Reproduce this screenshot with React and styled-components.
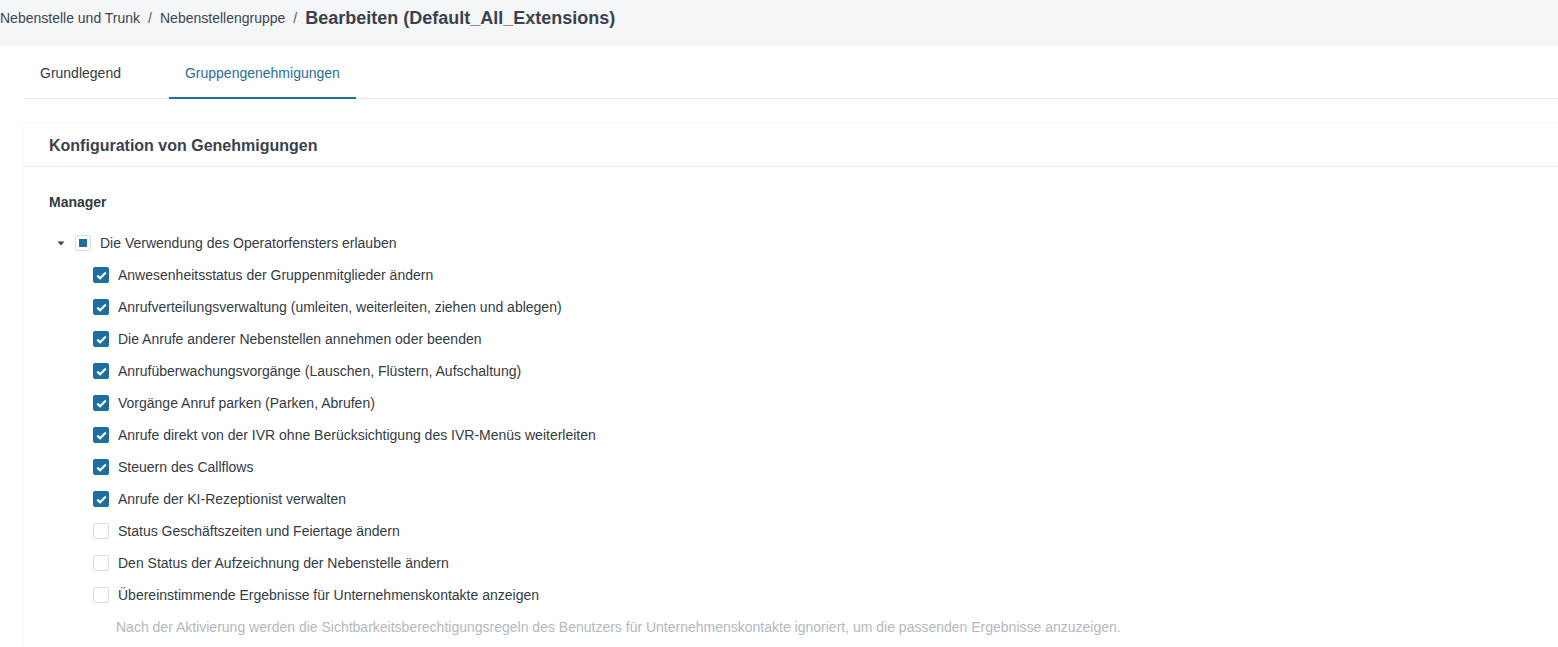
import React from 'react';
import styled, { createGlobalStyle } from 'styled-components';

const GlobalStyle = createGlobalStyle`
  body {
    margin: 0;
    background: #ffffff;
    font-family: "Liberation Sans", Arial, sans-serif;
    color: #333a44;
  }
`;

const permissions = [
  { label: 'Anwesenheitsstatus der Gruppenmitglieder ändern', checked: true },
  { label: 'Anrufverteilungsverwaltung (umleiten, weiterleiten, ziehen und ablegen)', checked: true },
  { label: 'Die Anrufe anderer Nebenstellen annehmen oder beenden', checked: true },
  { label: 'Anrufüberwachungsvorgänge (Lauschen, Flüstern, Aufschaltung)', checked: true },
  { label: 'Vorgänge Anruf parken (Parken, Abrufen)', checked: true },
  { label: 'Anrufe direkt von der IVR ohne Berücksichtigung des IVR-Menüs weiterleiten', checked: true },
  { label: 'Steuern des Callflows', checked: true },
  { label: 'Anrufe der KI-Rezeptionist verwalten', checked: true },
  { label: 'Status Geschäftszeiten und Feiertage ändern', checked: false },
  { label: 'Den Status der Aufzeichnung der Nebenstelle ändern', checked: false },
  { label: 'Übereinstimmende Ergebnisse für Unternehmenskontakte anzeigen', checked: false },
];

function CheckBox({ state }) {
  return (
    <Box $state={state}>
      {state === 'checked' && (
        <svg width="11" height="9" viewBox="0 0 11 9">
          <path d="M1.2 4.6 L4.2 7.3 L9.8 1.6" fill="none" stroke="#fff" strokeWidth="2.1" />
        </svg>
      )}
      {state === 'partial' && <PartialMark />}
    </Box>
  );
}

function App() {
  return (
    <>
      <GlobalStyle />
      <Header>
        <Crumb>Nebenstelle und Trunk</Crumb>
        <Sep>/</Sep>
        <Crumb>Nebenstellengruppe</Crumb>
        <Sep>/</Sep>
        <PageTitle>Bearbeiten (Default_All_Extensions)</PageTitle>
      </Header>
      <Main>
        <Tabs>
          <Tab>Grundlegend</Tab>
          <Tab $active>Gruppengenehmigungen</Tab>
        </Tabs>
        <Card>
          <CardHeader>Konfiguration von Genehmigungen</CardHeader>
          <CardBody>
            <SectionTitle>Manager</SectionTitle>
            <Row>
              <Switcher>
                <svg width="8" height="5" viewBox="0 0 8 5">
                  <path d="M0.5 0.5 L7.5 0.5 L4 4.5 Z" fill="#3d4550" />
                </svg>
              </Switcher>
              <CheckBox state="partial" />
              <Label>Die Verwendung des Operatorfensters erlauben</Label>
            </Row>
            {permissions.map((p) => (
              <Row key={p.label} $child>
                <CheckBox state={p.checked ? 'checked' : 'empty'} />
                <Label>{p.label}</Label>
              </Row>
            ))}
            <Hint>
              Nach der Aktivierung werden die Sichtbarkeitsberechtigungsregeln des Benutzers für Unternehmenskontakte ignoriert, um die passenden Ergebnisse anzuzeigen.
            </Hint>
          </CardBody>
        </Card>
      </Main>
    </>
  );
}

export default App;

const Header = styled.div`
  height: 46px;
  box-sizing: border-box;
  padding-bottom: 10px;
  background: #f5f6f8;
  display: flex;
  align-items: center;
  white-space: nowrap;
`;

const Crumb = styled.span`
  font-size: 14px;
  color: #3d4551;
`;

const Sep = styled.span`
  font-size: 14px;
  color: #555c66;
  margin: 0 8px;
`;

const PageTitle = styled.span`
  font-size: 18px;
  font-weight: bold;
  color: #3a424e;
`;

const Main = styled.div`
  padding-left: 24px;
`;

const Tabs = styled.div`
  display: flex;
  gap: 32px;
  height: 52px;
  border-bottom: 1px solid #e9eaec;
`;

const Tab = styled.div`
  display: flex;
  align-items: center;
  padding: 0 16px;
  font-size: 14px;
  color: ${({ $active }) => ($active ? '#1f6ea0' : '#333a44')};
  border-bottom: 2px solid ${({ $active }) => ($active ? '#1f6ea0' : 'transparent')};
  margin-bottom: -1px;
  margin-top: 2px;
`;

const Card = styled.div`
  margin-top: 25px;
  background: #fff;
  box-shadow: 0 0 6px rgba(0, 0, 0, 0.05);
`;

const CardHeader = styled.div`
  height: 43px;
  display: flex;
  align-items: center;
  padding-left: 25px;
  padding-top: 1px;
  box-sizing: border-box;
  font-size: 16px;
  font-weight: bold;
  color: #3a424e;
  border-bottom: 1px solid #ebecee;
`;

const CardBody = styled.div`
  padding: 25px 25px 12px;
`;

const SectionTitle = styled.div`
  font-size: 14px;
  font-weight: bold;
  line-height: 20px;
  color: #333a44;
  margin-bottom: 15px;
`;

const Row = styled.div`
  display: flex;
  align-items: center;
  height: 32px;
  padding-left: ${({ $child }) => ($child ? '44px' : '0')};
`;

const Switcher = styled.span`
  width: 24px;
  margin-right: 2px;
  display: flex;
  justify-content: center;
  align-items: center;
  padding-top: 1px;
`;

const Box = styled.span`
  width: 16px;
  height: 16px;
  box-sizing: border-box;
  border-radius: 2px;
  display: flex;
  align-items: center;
  justify-content: center;
  flex-shrink: 0;
  background: ${({ $state }) => ($state === 'checked' ? '#1f6ea0' : '#fff')};
  border: 1px solid ${({ $state }) => ($state === 'checked' ? '#1f6ea0' : '#dcdee2')};
`;

const PartialMark = styled.span`
  width: 8px;
  height: 8px;
  background: #1f6ea0;
`;

const Label = styled.span`
  margin-left: 9px;
  font-size: 14px;
  color: #333a44;
`;

const Hint = styled.div`
  margin-top: 6px;
  padding-left: 67px;
  font-size: 14px;
  line-height: 20px;
  color: #b3b8be;
`;
